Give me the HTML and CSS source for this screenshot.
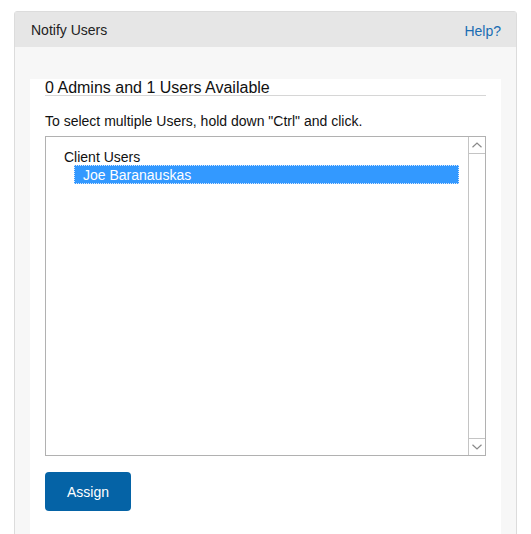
FILE: index.html
```html
<!DOCTYPE html>
<html>
<head>
<meta charset="utf-8">
<link rel="stylesheet" href="styles.css">
</head>
<body>
<div class="panel">
  <div class="panel-header">
    <span class="panel-title">Notify Users</span>
    <a class="help" href="#">Help?</a>
  </div>
  <div class="panel-body">
    <div class="card">
      <h2 class="card-title">0 Admins and 1 Users Available</h2>
      <p class="hint">To select multiple Users, hold down "Ctrl" and click.</p>
      <div class="listbox">
        <div class="list-content">
          <div class="group-label">Client Users</div>
          <div class="option selected">Joe Baranauskas</div>
        </div>
        <div class="scrollbar">
          <div class="sb-btn sb-up">
            <svg width="10" height="6" viewBox="0 0 10 6"><path d="M0.5 5.2 L5 1 L9.5 5.2" fill="none" stroke="#8a8a8a" stroke-width="1.2"/></svg>
          </div>
          <div class="sb-track"></div>
          <div class="sb-btn sb-down">
            <svg width="10" height="6" viewBox="0 0 10 6"><path d="M0.5 0.8 L5 5 L9.5 0.8" fill="none" stroke="#8a8a8a" stroke-width="1.2"/></svg>
          </div>
        </div>
      </div>
      <button class="assign">Assign</button>
    </div>
  </div>
</div>
</body>
</html>
```

FILE: styles.css
```css
* { box-sizing: border-box; }
html, body { margin: 0; padding: 0; background: #fff; }
body {
  font-family: "Liberation Sans", Arial, sans-serif;
  font-size: 14px;
  color: #222;
  padding: 11px 14px 0 14px;
  height: 534px;
  overflow: hidden;
}
.panel {
  width: 503px;
  border: 1px solid #dcdcdc;
  border-radius: 3px 3px 0 0;
  background: #f7f7f7;
  min-height: 540px;
}
.panel-header {
  height: 35px;
  background: #e6e6e6;
  display: flex;
  align-items: center;
  justify-content: space-between;
  padding: 0 15px 0 16px;
}
.panel-title { font-size: 14px; color: #222; padding-top: 1px; }
.help { color: #1a6db3; text-decoration: none; font-size: 14px; padding-top: 3px; }
.panel-body {
  padding: 32px 15px 0 15px;
}
.card {
  background: #fff;
  padding: 0 15px;
  min-height: 470px;
}
.card-title {
  margin: 0;
  font-weight: normal;
  font-size: 16px;
  line-height: 15px;
  padding-top: 1px;
  border-bottom: 1px solid #d6d6d6;
  color: #111;
}
.hint {
  margin: 17px 0 0 0;
  font-size: 14px;
  line-height: 16px;
  color: #111;
}
.listbox {
  margin-top: 7px;
  height: 320px;
  border: 1px solid #b1b1b1;
  display: flex;
}
.list-content {
  flex: 1;
  padding: 12px 9px 0 18px;
}
.group-label {
  line-height: 16px;
  color: #111;
}
.option {
  margin-left: 10px;
  padding-left: 9px;
  padding-top: 1px;
  line-height: 18px;
  height: 19px;
}
.option.selected {
  background: #3399ff;
  color: #fff;
  outline: 1px dotted #d8e8ff;
  outline-offset: -1px;
}
.scrollbar {
  width: 17px;
  border-left: 1px solid #c4c4c4;
  display: flex;
  flex-direction: column;
  background: #fff;
}
.sb-btn {
  height: 17px;
  display: flex;
  align-items: center;
  justify-content: center;
}
.sb-up { border-bottom: 1px solid #c4c4c4; }
.sb-down { border-top: 1px solid #c4c4c4; }
.sb-track { flex: 1; }
.assign {
  margin-top: 16px;
  width: 86px;
  height: 39px;
  border: none;
  border-radius: 4px;
  background: #0563a6;
  color: #fff;
  font-family: "Liberation Sans", Arial, sans-serif;
  font-size: 14px;
  padding: 0;
}
```
